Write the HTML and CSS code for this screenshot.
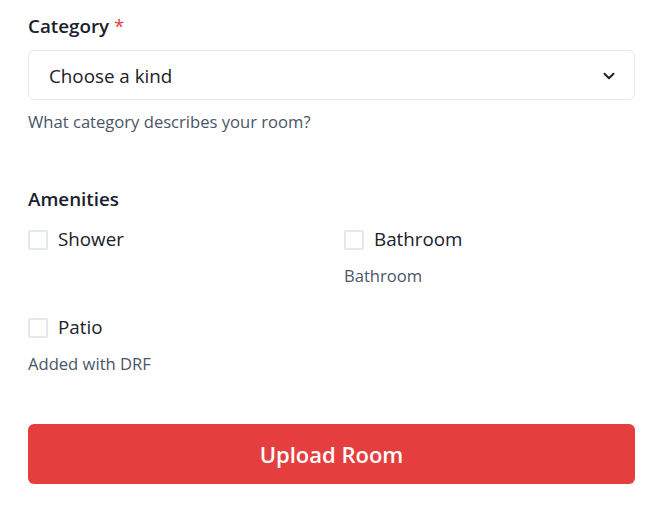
FILE: index.html
```html
<!DOCTYPE html>
<html lang="en">
<head>
<meta charset="utf-8">
<title>Upload Room</title>
<link rel="stylesheet" href="styles.css">
</head>
<body>
<form class="form">
  <div class="field">
    <label class="label">Category <span class="req">*</span></label>
    <div class="select">
      <span class="select-text">Choose a kind</span>
      <svg class="chev" width="14" height="14" viewBox="0 0 14 14"><path d="M2.5 4.8 L7 9.2 L11.5 4.8" fill="none" stroke="#1A202C" stroke-width="2" stroke-linecap="round" stroke-linejoin="round"/></svg>
    </div>
    <p class="helper help-cat">What category describes your room?</p>
  </div>

  <div class="field amen">
    <div class="label">Amenities</div>
    <div class="grid">
      <div class="item">
        <label class="check"><span class="box"></span><span>Shower</span></label>
      </div>
      <div class="item">
        <label class="check"><span class="box"></span><span>Bathroom</span></label>
        <p class="helper">Bathroom</p>
      </div>
      <div class="item">
        <label class="check"><span class="box"></span><span>Patio</span></label>
        <p class="helper">Added with DRF</p>
      </div>
    </div>
  </div>

  <button type="button" class="btn">Upload Room</button>
</form>
</body>
</html>
```

FILE: styles.css
```css
* { box-sizing: border-box; }
html, body { margin: 0; background: #fff; }
body {
  font-family: "Open Sans", "Noto Sans", sans-serif;
  color: #1A202C;
}
.form {
  width: 607px;
  margin-left: 28px;
  padding-top: 13px;
}
.label {
  display: block;
  font-size: 18.8px;
  line-height: 27px;
  font-weight: 600;
  margin-bottom: 10px;
}
.req { color: #E53E3E; font-weight: 500; }
.select {
  height: 50px;
  border: 1px solid #E2E8F0;
  border-radius: 6px;
  display: flex;
  align-items: center;
  justify-content: space-between;
  padding: 1px 18px 0 20px;
  font-size: 18.8px;
}
.chev { display: block; }
.helper {
  margin: 0;
  font-size: 16.6px;
  line-height: 24px;
  color: #4A5568;
}
.help-cat { margin-top: 10px; }
.amen { margin-top: 52px; }
.amen .label { margin-bottom: 13px; }
.grid {
  display: grid;
  grid-template-columns: 1fr 1fr;
  column-gap: 25px;
  row-gap: 26px;
}
.check {
  display: flex;
  align-items: center;
  gap: 10px;
  font-size: 18.8px;
  line-height: 27px;
}
.box {
  width: 20px;
  height: 20px;
  border: 2px solid #E2E8F0;
  border-radius: 2px;
  flex: none;
}
.item .helper { margin-top: 11px; }
.btn {
  display: block;
  width: 100%;
  height: 60px;
  margin-top: 48px;
  border: none;
  border-radius: 6px;
  background: #E53E3E;
  color: #fff;
  font-family: inherit;
  font-size: 22px;
  font-weight: 600;
}
```
